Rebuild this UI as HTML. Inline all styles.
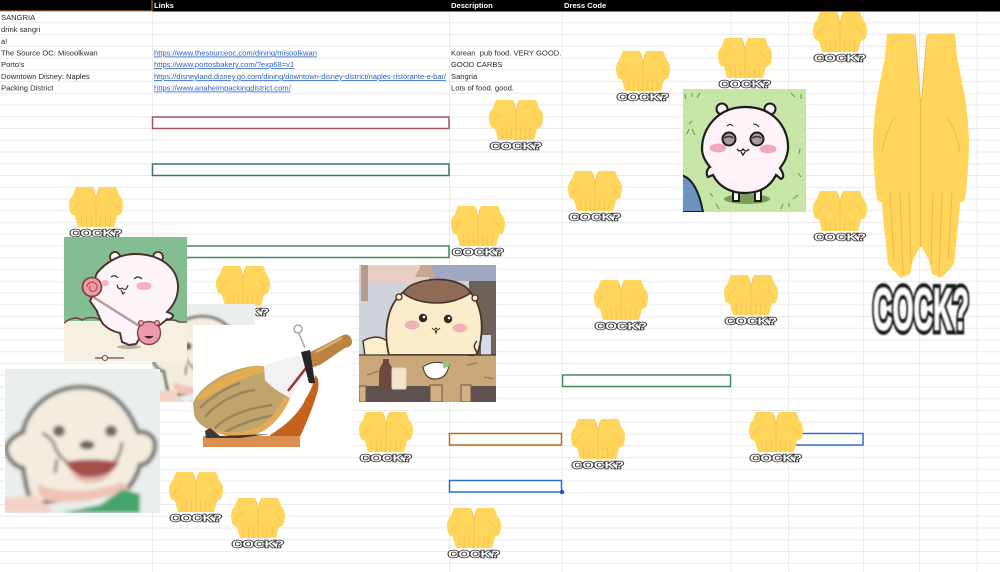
<!DOCTYPE html>
<html><head><meta charset="utf-8">
<style>
html,body{margin:0;padding:0;background:#fff}
body{width:1000px;height:572px;overflow:hidden;position:relative}
svg{position:absolute;left:0;top:0;display:block}
.c{font:7.6px "Liberation Sans",sans-serif;fill:#2a2a2a;white-space:pre}
.h{font:bold 7.6px "Liberation Sans",sans-serif;fill:#fff}
.l{font:7.6px "Liberation Sans",sans-serif;fill:#2a5fc4;text-decoration:underline}
.s{font:900 10px "Liberation Sans",sans-serif;fill:#fff;stroke:#333;stroke-width:1.500px;paint-order:stroke}
</style></head><body>
<svg width="1000" height="572" viewBox="0 0 1000 572" xmlns="http://www.w3.org/2000/svg">
<defs>
<symbol id="hands" viewBox="0 0 54 42" preserveAspectRatio="none">
<path fill="#ffd55c" d="M7 1H24Q26 5 27 12 28 5 30 1H47Q49 5 50 9 54 13 54 18 54 24 52 28L48 30 45 41H9L6 30 2 28Q0 24 0 18 0 13 4 9 5 5 7 1Z"/>
<path fill="none" stroke="#f8bd4e" stroke-width=".7" d="M25 4L27 13V41M29 4L27 13M12 29L13 40M17 29L18 41M22 28L22.500 41M42 29L41 40M37 29L36 41M32 28L31.500 41M4 25Q6 19 12 15M50 25Q48 19 42 15"/>
</symbol>
<filter id="b2" x="-5%" y="-5%" width="110%" height="110%"><feGaussianBlur stdDeviation="1.800"/></filter>
<filter id="b07" x="-10%" y="-10%" width="120%" height="120%"><feGaussianBlur stdDeviation=".8"/></filter>
<symbol id="face" viewBox="0 0 155 144" preserveAspectRatio="none">
<g filter="url(#b2)">
<rect x="-5" y="-5" width="165" height="154" fill="#eaeeec"/>
<path d="M18 63C22 38 48 18 75 18 100 18 120 30 133 63 145 62 151 70 150 78 149 88 142 96 135 96 133 105 128 113 123 119L30 135C25 130 24 126 23 124 20 112 19 105 18 99 10 98 1 88 1 79 3 72 10 66 18 63Z" fill="#f3ecdf" stroke="#6e6a65" stroke-width="4.500"/>
<ellipse cx="54" cy="62" rx="6" ry="5.500" fill="#6f665b"/>
<ellipse cx="106" cy="62" rx="6" ry="5.500" fill="#6f665b"/>
<ellipse cx="82" cy="76" rx="7.500" ry="4.500" fill="#6a605a"/>
<path d="M37 64Q48 70 50 78 54 88 62 93M117 73Q116 85 110 92M52 90L50 104" fill="none" stroke="#777068" stroke-width="2.800"/>
<path d="M60 93Q85 88 114 93 106 108 85 109 68 108 60 93Z" fill="#a64f4c"/>
<path d="M64 103Q85 114 108 102 100 114 85 114 72 114 64 103Z" fill="#e8b9b0"/>
<path d="M32 119Q34 112 40 118 75 128 118 113L124 121Q85 136 42 132 36 130 32 119Z" fill="#efc3b6"/>
<path d="M55 144L95 136 118 120 135 125V144Z" fill="#45a56c"/>
<path d="M-5 144V130L30 126 50 144Z" fill="#f5d2c6"/>
</g>
</symbol>
</defs>

<!-- grid -->
<g stroke="#e9ebed" stroke-width="1" fill="none">
<path d="M0 22.750H1000M0 34.500H1000M0 46.250H1000M0 58H1000M0 69.750H1000M0 81.500H1000M0 93.250H1000M0 105H1000M0 116.750H1000M0 128.500H1000M0 140.250H1000M0 152H1000M0 163.750H1000M0 175.500H1000M0 187.250H1000M0 199H1000M0 210.750H1000M0 222.500H1000M0 234.250H1000M0 246H1000M0 257.750H1000M0 269.500H1000M0 281.250H1000M0 293H1000M0 304.750H1000M0 316.500H1000M0 328.250H1000M0 340H1000M0 351.750H1000M0 363.500H1000M0 375.250H1000M0 387H1000M0 398.750H1000M0 410.500H1000M0 422.250H1000M0 434H1000M0 445.750H1000M0 457.500H1000M0 469.250H1000M0 481H1000M0 492.750H1000M0 504.500H1000M0 516.250H1000M0 528H1000M0 539.750H1000M0 551.500H1000M0 563.250H1000"/>
<path d="M152.500 11V572M449.500 11V572M562 11V572M731 11V572M788.500 11V572M863.500 11V572M919.500 11V572M977 11V572"/>
</g>

<!-- header -->
<rect x="0" y="0" width="1000" height="11.500" fill="#000"/>
<rect x="0" y="10.500" width="152" height="1" fill="#c9803a"/>
<rect x="151.500" y="0" width="1" height="11.500" fill="#c9803a"/>
<text class="h" x="154" y="8">Links</text>
<text class="h" x="451" y="8">Description</text>
<text class="h" x="564" y="8">Dress Code</text>

<!-- cells -->
<text class="c" x="1" y="20">SANGRIA</text>
<text class="c" x="1" y="32">drink sangri</text>
<text class="c" x="1" y="44">a!</text>
<text class="c" x="1" y="55.500">The Source OC: Misoolkwan</text>
<text class="c" x="1" y="67">Porto's</text>
<text class="c" x="1" y="79">Downtown Disney: Naples</text>
<text class="c" x="1" y="90.500">Packing District</text>
<text class="l" x="154" y="55.500">https://www.thesourceoc.com/dining/misoolkwan</text>
<text class="l" x="154" y="67">https://www.portosbakery.com/?exp68=v1</text>
<text class="l" x="154" y="79" textLength="292" lengthAdjust="spacingAndGlyphs">https://disneyland.disney.go.com/dining/downtown-disney-district/naples-ristorante-e-bar/</text>
<text class="l" x="154" y="90.500">https://www.anaheimpackingdistrict.com/</text>
<text class="c" x="451" y="55.500">Korean  pub food. VERY GOOD.</text>
<text class="c" x="451" y="67">GOOD CARBS</text>
<text class="c" x="451" y="79">Sangria</text>
<text class="c" x="451" y="90.500">Lots of food. good.</text>

<!-- coloured selections -->
<g fill="#fff" stroke-width="1.500">
<rect x="152.500" y="117" width="296.500" height="11.500" stroke="#a9555d"/>
<rect x="152.500" y="164" width="296.500" height="11.500" stroke="#33776f"/>
<rect x="152.500" y="246" width="296.500" height="11.500" stroke="#418a5c"/>
<rect x="562.500" y="375" width="168" height="11.500" stroke="#418a5c"/>
<rect x="449.500" y="433.500" width="112" height="11.500" stroke="#b8691c"/>
<rect x="449.500" y="480.500" width="112" height="11.500" stroke="#2c6fd1"/>
<rect x="789" y="433.500" width="74" height="11.500" stroke="#2c6fd1"/>
</g>
<circle cx="562" cy="492" r="2.200" fill="#1a55c8"/>

<!-- stickers -->
<g transform="translate(489,99)"><use href="#hands" width="54" height="42"/><text class="s" x="27" y="50.500" text-anchor="middle" textLength="52" lengthAdjust="spacingAndGlyphs">COCK?</text></g>
<g transform="translate(616,50)"><use href="#hands" width="54" height="42"/><text class="s" x="27" y="50.500" text-anchor="middle" textLength="52" lengthAdjust="spacingAndGlyphs">COCK?</text></g>
<g transform="translate(718,37)"><use href="#hands" width="54" height="42"/><text class="s" x="27" y="50.500" text-anchor="middle" textLength="52" lengthAdjust="spacingAndGlyphs">COCK?</text></g>
<g transform="translate(813,11)"><use href="#hands" width="54" height="42"/><text class="s" x="27" y="50.500" text-anchor="middle" textLength="52" lengthAdjust="spacingAndGlyphs">COCK?</text></g>
<g transform="translate(813,190)"><use href="#hands" width="54" height="42"/><text class="s" x="27" y="50.500" text-anchor="middle" textLength="52" lengthAdjust="spacingAndGlyphs">COCK?</text></g>
<g transform="translate(724,274)"><use href="#hands" width="54" height="42"/><text class="s" x="27" y="50.500" text-anchor="middle" textLength="52" lengthAdjust="spacingAndGlyphs">COCK?</text></g>
<g transform="translate(568,170)"><use href="#hands" width="54" height="42"/><text class="s" x="27" y="50.500" text-anchor="middle" textLength="52" lengthAdjust="spacingAndGlyphs">COCK?</text></g>
<g transform="translate(451,205)"><use href="#hands" width="54" height="42"/><text class="s" x="27" y="50.500" text-anchor="middle" textLength="52" lengthAdjust="spacingAndGlyphs">COCK?</text></g>
<g transform="translate(69,186)"><use href="#hands" width="54" height="42"/><text class="s" x="27" y="50.500" text-anchor="middle" textLength="52" lengthAdjust="spacingAndGlyphs">COCK?</text></g>
<g transform="translate(216,265)"><use href="#hands" width="54" height="42"/><text class="s" x="27" y="50.500" text-anchor="middle" textLength="52" lengthAdjust="spacingAndGlyphs">COCK?</text></g>
<g transform="translate(594,279)"><use href="#hands" width="54" height="42"/><text class="s" x="27" y="50.500" text-anchor="middle" textLength="52" lengthAdjust="spacingAndGlyphs">COCK?</text></g>
<g transform="translate(359,411)"><use href="#hands" width="54" height="42"/><text class="s" x="27" y="50.500" text-anchor="middle" textLength="52" lengthAdjust="spacingAndGlyphs">COCK?</text></g>
<g transform="translate(571,418)"><use href="#hands" width="54" height="42"/><text class="s" x="27" y="50.500" text-anchor="middle" textLength="52" lengthAdjust="spacingAndGlyphs">COCK?</text></g>
<g transform="translate(749,411)"><use href="#hands" width="54" height="42"/><text class="s" x="27" y="50.500" text-anchor="middle" textLength="52" lengthAdjust="spacingAndGlyphs">COCK?</text></g>
<g transform="translate(169,471)"><use href="#hands" width="54" height="42"/><text class="s" x="27" y="50.500" text-anchor="middle" textLength="52" lengthAdjust="spacingAndGlyphs">COCK?</text></g>
<g transform="translate(231,497)"><use href="#hands" width="54" height="42"/><text class="s" x="27" y="50.500" text-anchor="middle" textLength="52" lengthAdjust="spacingAndGlyphs">COCK?</text></g>
<g transform="translate(447,507)"><use href="#hands" width="54" height="42"/><text class="s" x="27" y="50.500" text-anchor="middle" textLength="52" lengthAdjust="spacingAndGlyphs">COCK?</text></g>

<!-- big sticker -->
<g transform="translate(873,32)">
<path fill="#ffd55c" d="M14 1.500H41L47 60 48 68 49 60 55 1.500H82L84 25 92 65Q95 85 96 108 96 135 92 168L87 171 86 185 81 232 76 238 68 246 59 242 56 228 49 215H47L40 228 37 242 28 246 20 238 15 232 10 185 9 171 4 168Q0 135 0 108 1 85 4 65L12 25Z"/>
<path fill="none" stroke="#f7b44a" stroke-width="1" d="M42 3L47.500 70V215M54 3L48.500 70M17 160L21 228M27 160L30 243M36 160L38 232M79 160L75 228M69 160L66 243M60 160L58 232M9 120Q12 100 22 85M87 120Q84 100 74 85"/>
<text x="48" y="298" text-anchor="middle" textLength="96" lengthAdjust="spacingAndGlyphs" filter="url(#b07)" style="font:900 60px 'Liberation Sans',sans-serif;fill:#fff;stroke:#1e1e1e;stroke-width:9px;paint-order:stroke">COCK?</text>
</g>

<!-- blurred face behind -->
<svg x="152" y="304" width="103" height="98" viewBox="0 0 103 98"><use href="#face" width="103" height="98"/></svg>

<!-- white bear -->
<svg x="683" y="89" width="123" height="123" viewBox="0 0 123 123">
<rect width="123" height="123" fill="#c6e5a6"/>
<path d="M-2 86Q14 90 20 123H-2Z" fill="#6b93bd" stroke="#1c1c1c" stroke-width="2"/>
<ellipse cx="64" cy="110" rx="23" ry="5" fill="#7c9c5e"/>
<path d="M50 100V112H56V104M72 104V112H78V100" fill="#fff" stroke="#1c1c1c" stroke-width="2"/>
<circle cx="39" cy="20" r="5.500" fill="#fdf3f6" stroke="#1c1c1c" stroke-width="2"/>
<circle cx="87" cy="20" r="5.500" fill="#fdf3f6" stroke="#1c1c1c" stroke-width="2"/>
<path d="M62 18C92 18 106 40 105 60 104 70 100 75 97 79 100 84 102 88 98 90L93 86C86 100 74 104 62 104 48 104 36 98 30 86L25 88C22 84 25 79 27 78 22 72 19 66 19 60 19 38 36 18 62 18Z" fill="#fdf3f8" stroke="#1c1c1c" stroke-width="2.200"/>
<circle cx="46" cy="50" r="6.500" fill="#a59aa0" stroke="#1c1c1c" stroke-width="2"/>
<circle cx="74" cy="50" r="6.500" fill="#a59aa0" stroke="#1c1c1c" stroke-width="2"/>
<path d="M41 49Q46 46 50 49M69 49Q74 46 78 49" fill="none" stroke="#3a3034" stroke-width="1.500"/>
<ellipse cx="35" cy="59" rx="8.500" ry="4.500" fill="#eda8c0"/>
<ellipse cx="85" cy="60" rx="8.500" ry="4.500" fill="#eda8c0"/>
<path d="M54 60Q57 64 60 60 63 64 66 60M58 63L60 66 62 63" fill="none" stroke="#1c1c1c" stroke-width="1.300"/>
<path d="M44 37Q47 34 50 37M70 35Q74 35 76 38" fill="none" stroke="#1c1c1c" stroke-width="1"/>
<path d="M3 10L2 5M9 8L9 4M14 9L17 4M108 4L112 8M118 10V5M4 45L6 40M12 46L9 40M116 65L117 60M118 88L115 84M30 108L27 104M36 120L33 115M98 120L100 115M106 118V114M110 110L115 106M6 35L9 32" stroke="#5f9a45" stroke-width="1" fill="none"/>
</svg>

<!-- lollipop bear -->
<svg x="64" y="237" width="123" height="125" viewBox="0 0 123 125">
<rect width="123" height="125" fill="#f6f0e2"/>
<rect width="123" height="84" fill="#84bd92"/>
<path d="M0 86Q10 78 18 83 28 78 36 83L95 86Q105 80 115 85H123" fill="none" stroke="#6a4a40" stroke-width="1.600"/>
<ellipse cx="65" cy="110" rx="12" ry="2" fill="#b8b3a6"/>
<circle cx="51" cy="20" r="5" fill="#fdf4f6" stroke="#4a2e2a" stroke-width="1.800"/>
<circle cx="94" cy="20" r="5" fill="#fdf4f6" stroke="#4a2e2a" stroke-width="1.800"/>
<path d="M71 17C98 17 114 32 114 50 114 60 110 68 103 75 106 76 109 77 109 79 108 82 105 83 103 82 99 86 96 88 93 90 84 96 78 100 75 102L72 107 65 108 58 105 56 96C46 94 40 88 39 87 36 82 34 78 33 74L26 64C30 58 28 46 33 36 42 25 56 17 71 17Z" fill="#fdf5f9" stroke="#4a2e2a" stroke-width="1.900"/>
<path d="M26 58L80 92" stroke="#b99a9a" stroke-width="2.500"/>
<circle cx="28" cy="50" r="9.500" fill="#ee9ea4" stroke="#7c4547" stroke-width="1.800"/>
<path d="M23 50A5 5 0 1 1 32 53 3.500 3.500 0 1 1 26 49" fill="none" stroke="#b9545c" stroke-width="1.300"/>
<ellipse cx="80" cy="49" rx="7.500" ry="4" fill="#f3b0c0"/>
<ellipse cx="41" cy="46" rx="4" ry="3" fill="#f3b0c0"/>
<path d="M47 40Q51 37 54 41M70 42Q74 38 78 42M53 48Q55 54 58 51 62 55 64 48M57 53L59 57 61 55" fill="none" stroke="#3c2a28" stroke-width="1.200"/>
<circle cx="85" cy="96" r="11.500" fill="#ee9aae" stroke="#7c4547" stroke-width="1.400"/>
<circle cx="77" cy="86" r="2.500" fill="#ee9aae" stroke="#7c4547"/><circle cx="93" cy="86" r="2.500" fill="#ee9aae" stroke="#7c4547"/>
<path d="M81 99Q85 103 89 99" fill="#3c2a28" stroke="#3c2a28"/>
<path d="M31 121H60" stroke="#6a4a40" stroke-width="1.300"/><circle cx="41" cy="121" r="2.500" fill="#f6f0e2" stroke="#6a4a40"/>
</svg>

<!-- hat bear -->
<svg x="359" y="265" width="137" height="137" viewBox="0 0 137 137">
<rect width="137" height="137" fill="#ced3dc"/>
<rect width="137" height="18" fill="#e6cdc5"/>
<rect x="70" width="67" height="16" fill="#9fa9c1"/>
<rect x="110" y="16" width="27" height="76" fill="#6e625b"/>
<rect x="2" y="0" width="7" height="36" fill="#b69d8b"/>
<rect x="122" y="70" width="10" height="20" fill="#d6dce6"/>
<path d="M56 12L62 0 72 0 76 12Z" fill="#c6a78f"/>
<path d="M6 92 4 76Q22 66 34 82L40 92Z" fill="#fbeecc" stroke="#46332b" stroke-width="1.400"/>
<path d="M30 90C24 66 28 38 46 26 58 14 98 12 110 26 124 40 126 66 118 90Z" fill="#fbeccb" stroke="#46332b" stroke-width="1.800"/>
<path d="M44 28C52 12 100 8 112 28 102 34 92 38 78 38 64 38 52 34 44 28Z" fill="#8e6a57" stroke="#46332b" stroke-width="1.600"/>
<circle cx="40" cy="32" r="3" fill="#fbeccb" stroke="#46332b" stroke-width="1.300"/><circle cx="116" cy="33" r="3" fill="#fbeccb" stroke="#46332b" stroke-width="1.300"/>
<circle cx="64" cy="53" r="4.200" fill="#32261f"/><circle cx="89" cy="54" r="4.200" fill="#32261f"/>
<circle cx="65" cy="52" r="1.300" fill="#fff"/><circle cx="90" cy="53" r="1.300" fill="#fff"/>
<ellipse cx="53" cy="60" rx="7.500" ry="4.500" fill="#f0b3b5"/><ellipse cx="101" cy="63" rx="7.500" ry="4.500" fill="#f0b3b5"/>
<path d="M73 63Q75 66 77 63 79 66 81 63M76 65L77 68 78 65" fill="none" stroke="#32261f" stroke-width="1"/>
<rect x="0" y="90" width="137" height="47" fill="#c9a779"/>
<path d="M0 90H137" stroke="#46332b" stroke-width="1.300"/>
<path d="M108 90Q122 92 116 84 114 80 118 76" fill="none" stroke="#46332b" stroke-width="1.500"/>
<path d="M8 110L20 106M108 100L118 98M125 112L135 114" stroke="#8a6e4e" stroke-width="1"/>
<rect x="7" y="121" width="64" height="16" fill="#5e524e"/>
<rect x="105" y="121" width="32" height="16" fill="#5e524e"/>
<path d="M20 124V110Q20 102 24 98V94H30V98Q34 102 34 110V124Z" fill="#6d4a41"/>
<rect x="33" y="103" width="14" height="21" rx="1.500" fill="#f3e6c6" stroke="#d9dadf"/>
<path d="M64 102Q75 94 90 100 88 114 76 114 66 114 64 102Z" fill="#fff" stroke="#46332b" stroke-width="1"/>
<path d="M84 97L90 96 90 102 84 103Z" fill="#9cc58b"/>
<rect x="71" y="120" width="12" height="17" fill="#d2b083" stroke="#6e5340" stroke-width="1"/>
<rect x="102" y="120" width="10" height="17" fill="#d2b083" stroke="#6e5340" stroke-width="1"/>
<rect x="0" y="121" width="7" height="16" fill="#d2b083" stroke="#6e5340" stroke-width="1"/>
</svg>

<!-- face -->
<use href="#face" x="5" y="369" width="155" height="144"/>

<!-- ham -->
<g>
<rect x="193" y="325" width="159" height="132" fill="#fff"/>
<path d="M302 355C312 352 330 342 343 335 349 333 352 338 352 342 352 346 349 347 345 348 337 353 328 360 320 365L310 368Z" fill="#bb8442"/>
<path d="M316 352C324 348 334 342 342 338" stroke="#dcae6d" stroke-width="2.500" fill="none"/>
<path d="M315 375C319 378 319 384 318 390 314 405 306 424 300 437H270V435C278 430 285 425 290 420 298 412 303 405 305 400 310 392 314 384 315 375Z" fill="#c5621c"/>
<rect x="203" y="436" width="97" height="11" fill="#dc9050"/>
<path d="M193 403C197 392 210 382 223 375 238 368 252 365 263 366L290 397C287 408 277 422 265 430 254 436 246 438 238 437 224 436 214 432 208 429 200 425 195 420 194 414Z" fill="#bfa46c"/>
<path d="M196 399C203 391 212 383 224 377 238 370 250 366 262 366L265 372C240 378 222 388 212 394 206 398 202 400 196 399Z" fill="#e3ab52"/>
<path d="M205 417C215 405 235 392 255 390M215 428C228 415 250 408 272 405M200 408C210 398 225 388 240 383M225 432C240 424 258 418 275 415" stroke="#8f7a54" stroke-width="2.500" fill="none" opacity=".75"/>
<path d="M205 428C222 436 246 438 265 430 278 420 286 408 290 398L284 397C274 420 258 430 240 432 226 433 214 431 205 428Z" fill="#e4ab55"/>
<path d="M205 431L210 428 220 436 270 434 240 438 206 438Z" fill="#3c3936"/>
<path d="M264 365C278 361 290 358 302 355L307 370C302 380 296 390 290 398 282 394 272 388 265 380Z" fill="#f2f2f4"/>
<path d="M306 368L288 391" stroke="#9c2f35" stroke-width="2.500"/>
<path d="M305 348L298 331" stroke="#a3a8a8" stroke-width="1.500"/>
<circle cx="298" cy="329" r="4" fill="#fff" stroke="#a3a8a8" stroke-width="1.500"/>
<path d="M301 352L310 350 315 383H309Z" fill="#26262a"/><circle cx="312" cy="381" r="2.500" fill="#26262a"/>
</g>
</svg>
</body></html>
